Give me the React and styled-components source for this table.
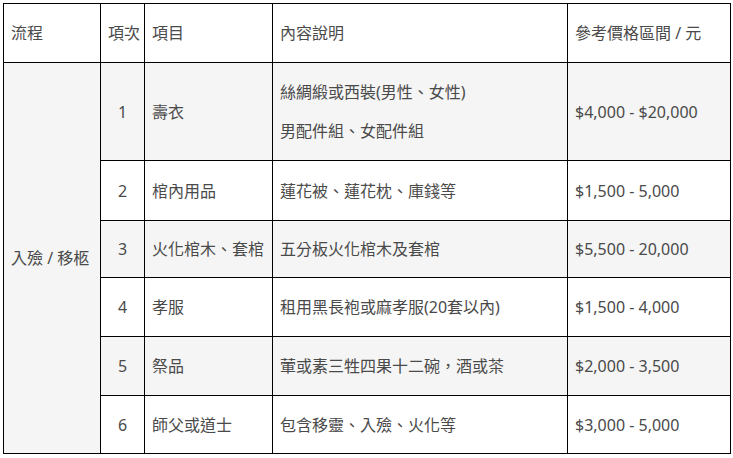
import React from 'react';
import styled, { createGlobalStyle } from 'styled-components';

const GlobalStyle = createGlobalStyle`
    body {
        margin: 0;
        background: #fff;
    }
`

const Wrapper = styled.div`
    padding: 3px;
    font-family: "Noto Sans", "Noto Sans CJK TC", sans-serif;
    font-size: 16px;
    color: #4a4a4a;
`

const Table = styled.table`
    width: 727px;
    table-layout: fixed;
    border-collapse: collapse;
    border: 1px solid #000;
`

const Row = styled.tr`
    background: ${props => props.$striped ? '#f5f5f5' : '#fff'};
    height: ${props => props.$height}px;
`

const Cell = styled.td`
    border: 1px solid #000;
    padding: 0 7px;
    line-height: 24px;
    vertical-align: middle;
    text-align: ${props => props.$center ? 'center' : 'left'};
    white-space: nowrap;
`

const HeadCell = styled(Cell).attrs({ as: 'th' })`
    font-weight: normal;
`

const Para = styled.p`
    margin: 0;

    & + & {
        margin-top: 15px;
    }
`

const items = [
    { no: 1, name: '壽衣', desc: ['絲綢緞或西裝(男性、女性)', '男配件組、女配件組'], price: '$4,000 - $20,000', h: 98 },
    { no: 2, name: '棺內用品', desc: ['蓮花被、蓮花枕、庫錢等'], price: '$1,500 - 5,000', h: 60 },
    { no: 3, name: '火化棺木、套棺', desc: ['五分板火化棺木及套棺'], price: '$5,500 - 20,000', h: 57 },
    { no: 4, name: '孝服', desc: ['租用黑長袍或麻孝服(20套以內)'], price: '$1,500 - 4,000', h: 59 },
    { no: 5, name: '祭品', desc: ['葷或素三牲四果十二碗，酒或茶'], price: '$2,000 - 3,500', h: 59 },
    { no: 6, name: '師父或道士', desc: ['包含移靈、入殮、火化等'], price: '$3,000 - 5,000', h: 58 },
]

function App() {
    return (
        <Wrapper>
            <GlobalStyle />
            <Table>
                <colgroup>
                    <col style={{ width: 97 }} />
                    <col style={{ width: 44 }} />
                    <col style={{ width: 128 }} />
                    <col style={{ width: 295 }} />
                    <col style={{ width: 163 }} />
                </colgroup>
                <thead>
                    <Row $height={59}>
                        <HeadCell>流程</HeadCell>
                        <HeadCell $center>項次</HeadCell>
                        <HeadCell>項目</HeadCell>
                        <HeadCell>內容說明</HeadCell>
                        <HeadCell>參考價格區間 / 元</HeadCell>
                    </Row>
                </thead>
                <tbody>
                    {items.map((item, i) => (
                        <Row key={item.no} $striped={i % 2 === 0} $height={item.h}>
                            {i === 0 && <Cell rowSpan={items.length}>入殮 / 移柩</Cell>}
                            <Cell $center>{item.no}</Cell>
                            <Cell>{item.name}</Cell>
                            <Cell>
                                {item.desc.map(line => <Para key={line}>{line}</Para>)}
                            </Cell>
                            <Cell>{item.price}</Cell>
                        </Row>
                    ))}
                </tbody>
            </Table>
        </Wrapper>
    );
}

export default App;
